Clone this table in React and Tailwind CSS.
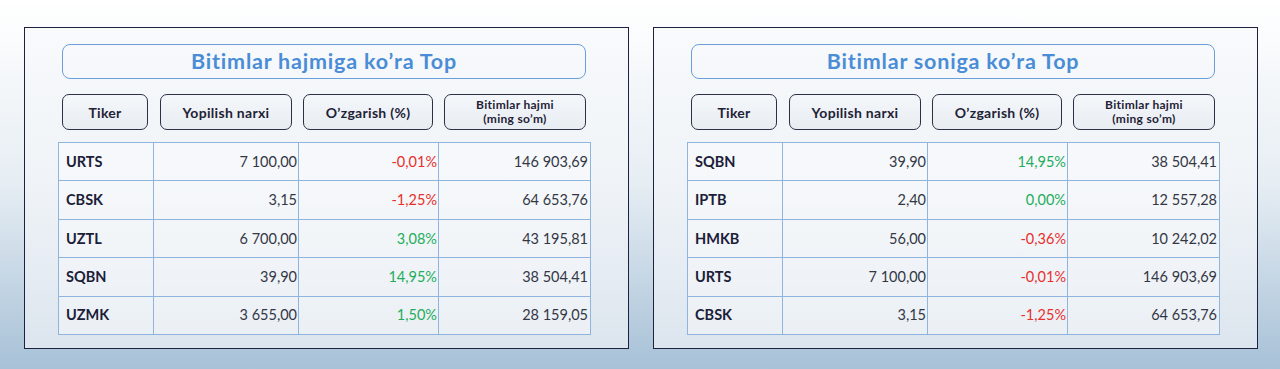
const volumeRows = [
  { t: "URTS", p: "7 100,00", c: "-0,01%", v: "146 903,69" },
  { t: "CBSK", p: "3,15", c: "-1,25%", v: "64 653,76" },
  { t: "UZTL", p: "6 700,00", c: "3,08%", v: "43 195,81" },
  { t: "SQBN", p: "39,90", c: "14,95%", v: "38 504,41" },
  { t: "UZMK", p: "3 655,00", c: "1,50%", v: "28 159,05" },
];

const countRows = [
  { t: "SQBN", p: "39,90", c: "14,95%", v: "38 504,41" },
  { t: "IPTB", p: "2,40", c: "0,00%", v: "12 557,28" },
  { t: "HMKB", p: "56,00", c: "-0,36%", v: "10 242,02" },
  { t: "URTS", p: "7 100,00", c: "-0,01%", v: "146 903,69" },
  { t: "CBSK", p: "3,15", c: "-1,25%", v: "64 653,76" },
];

function HeadBox({ className, children }) {
  return (
    <div
      className={`h-[36px] rounded-[7px] border-[1.5px] border-[#2b3046] bg-gradient-to-b from-[#f4f7fa] to-[#e8edf2] flex items-center justify-center text-center font-bold text-[#1f2236] ${className}`}
    >
      {children}
    </div>
  );
}

function TopPanel({ title, rows }) {
  return (
    <div className="w-[605px] h-[322px] border-[1.5px] border-[#1c2240] bg-gradient-to-b from-[#f8fafc] via-[#eff3f7] to-[#dce5ee] pl-[33px] pt-[16px]">
      <div className="ml-[4px] w-[524px]">
        <div className="h-[35px] rounded-[8px] border-[1.5px] border-[#6a9fd9] flex items-center justify-center text-[21.5px] tracking-[0.8px] font-bold text-[#4a8dd6]">
          {title}
        </div>
        <div className="mt-[15px] flex gap-[11px] text-[14px] tracking-[0.3px]">
          <HeadBox className="w-[86px] mr-[1px]">Tiker</HeadBox>
          <HeadBox className="w-[132px]">Yopilish narxi</HeadBox>
          <HeadBox className="w-[130px]">O’zgarish (%)</HeadBox>
          <HeadBox className="w-[142px] text-[12px] leading-[14px]">
            Bitimlar hajmi
            <br />
            (ming so’m)
          </HeadBox>
        </div>
      </div>
      <table className="mt-[12px] w-[532px] table-fixed border-collapse text-[14.5px]">
        <colgroup>
          <col className="w-[95px]" />
          <col className="w-[145px]" />
          <col className="w-[140px]" />
          <col className="w-[152px]" />
        </colgroup>
        <tbody>
          {rows.map((r) => {
            const neg = r.c.startsWith("-");
            return (
              <tr key={r.t} className="h-[38.4px] bg-white/40">
                <td className="border border-[#8fb5df] pl-[7px] font-bold text-[#1b2038]">{r.t}</td>
                <td className="border border-[#8fb5df] pr-[1px] text-right text-[#333745]">{r.p}</td>
                <td className={`border border-[#8fb5df] pr-[1px] text-right ${neg ? "text-[#e8302c]" : "text-[#22ad5c]"}`}>
                  {r.c}
                </td>
                <td className="border border-[#8fb5df] pr-[2px] text-right text-[#333745]">{r.v}</td>
              </tr>
            );
          })}
        </tbody>
      </table>
    </div>
  );
}

export default function App() {
  return (
    <div
      className="h-[369px] w-[1280px] bg-gradient-to-b from-[#ffffff] via-[#e6edf3] to-[#a7c1d7] pt-[27px] pl-[24px] flex gap-[24px]"
      style={{ fontFamily: "Lato, 'Open Sans', sans-serif" }}
    >
      <TopPanel title="Bitimlar hajmiga ko’ra Top" rows={volumeRows} />
      <TopPanel title="Bitimlar soniga ko’ra Top" rows={countRows} />
    </div>
  );
}
